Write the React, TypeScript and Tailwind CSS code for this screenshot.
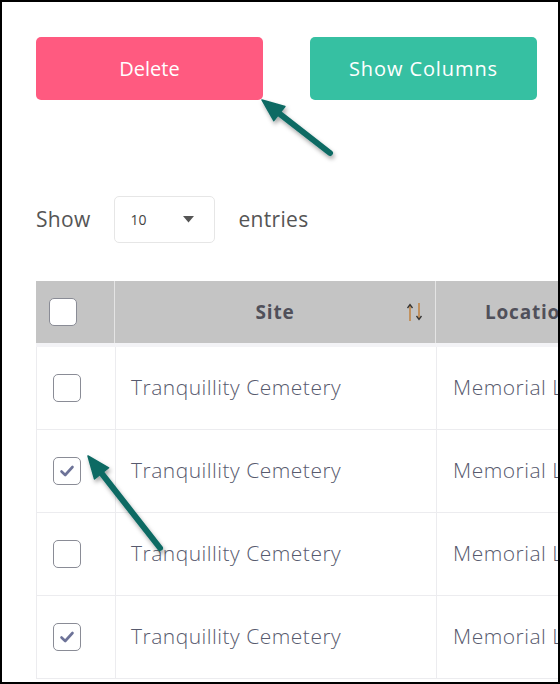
import React from "react";

const font = { fontFamily: '"Open Sans", "Noto Sans", sans-serif' };

function Arrow({ tail, tip }: { tail: [number, number]; tip: [number, number] }) {
  const dx = tip[0] - tail[0];
  const dy = tip[1] - tail[1];
  const len = Math.hypot(dx, dy);
  const ux = dx / len;
  const uy = dy / len;
  const bx = tip[0] - ux * 22;
  const by = tip[1] - uy * 22;
  const nx = -uy * 9;
  const ny = ux * 9;
  return (
    <g filter="url(#shadow)">
      <line
        x1={tail[0]}
        y1={tail[1]}
        x2={bx + ux * 4}
        y2={by + uy * 4}
        stroke="#0b6a64"
        strokeWidth={6}
        strokeLinecap="round"
      />
      <polygon
        points={`${tip[0]},${tip[1]} ${bx + nx},${by + ny} ${bx - nx},${by - ny}`}
        fill="#0b6a64"
        stroke="#0b6a64"
        strokeWidth={1.5}
        strokeLinejoin="round"
      />
    </g>
  );
}

function Check({ checked, className }: { checked?: boolean; className: string }) {
  return (
    <div
      className={`w-[28px] h-[28px] rounded-[5px] border border-[#8a8c96] bg-white flex items-center justify-center ${className}`}
    >
      {checked && (
        <svg width="16" height="14" viewBox="0 0 16 14">
          <path
            d="M2.5 7.5 L6.2 11 L13.5 3"
            fill="none"
            stroke="#6d7398"
            strokeWidth="2.6"
            strokeLinecap="round"
            strokeLinejoin="round"
          />
        </svg>
      )}
    </div>
  );
}

function SortIcon() {
  return (
    <svg width="20" height="20" viewBox="0 0 20 20">
      <path d="M5 19 V3" stroke="#c0782c" strokeWidth="1.3" />
      <path d="M2.5 6 L5 2.5 L7.5 6" fill="none" stroke="#333" strokeWidth="1.3" />
      <path d="M14 1 V17" stroke="#c0782c" strokeWidth="1.3" />
      <path d="M11.5 14 L14 17.5 L16.5 14" fill="none" stroke="#333" strokeWidth="1.3" />
    </svg>
  );
}

const rows = [false, true, false, true];

export default function App() {
  return (
    <div
      className="relative w-[560px] h-[684px] border-2 border-black bg-white overflow-hidden"
      style={font}
    >
      <div className="pl-[34px] pt-[35px]">
        {/* action buttons */}
        <div className="flex gap-[47px]">
          <button className="w-[227px] h-[63px] rounded-[5px] bg-[#ff5a80] text-white text-[20px]">
            Delete
          </button>
          <button className="w-[227px] h-[63px] rounded-[5px] bg-[#36c0a2] text-white text-[20px] tracking-[0.9px]">
            Show Columns
          </button>
        </div>

        {/* page size */}
        <div className="flex items-center mt-[96px] h-[47px] text-[21px] tracking-[0.3px] text-[#555]">
          <span>Show</span>
          <div className="ml-[23px] w-[101px] h-[47px] border border-[#e6e6e6] rounded-[5px] flex items-center pl-[16px] pr-[20px] justify-between tracking-normal">
            <span className="text-[14px] text-[#444]">10</span>
            <svg width="11" height="7" viewBox="0 0 11 7">
              <path d="M0 0 H11 L5.5 6.5 Z" fill="#555" />
            </svg>
          </div>
          <span className="ml-[24px]">entries</span>
        </div>

        {/* table */}
        <div className="mt-[38px] w-[700px]">
          <div className="flex h-[62px] bg-[#c4c4c4] text-[#50505a] font-bold text-[19px] tracking-[0.8px]">
            <div className="w-[79px] flex items-center border-r border-[#e4e4e4]">
              <Check className="ml-[13px]" />
            </div>
            <div className="w-[321px] flex items-center justify-center relative border-r border-[#e4e4e4]">
              <span>Site</span>
              <div className="absolute right-[10px] top-[21px]">
                <SortIcon />
              </div>
            </div>
            <div className="flex-1 flex items-center pl-[49px]">Location</div>
          </div>
          <div className="h-[4px] bg-[#f3f3f6]" />
          {rows.map((c, i) => (
            <div
              key={i}
              className="flex h-[83px] border-b border-[#ececef] border-l text-[21px] tracking-[0.5px] font-light text-[#575a6e]"
            >
              <div className="w-[79px] flex items-center border-r border-[#ececef]">
                <Check checked={c} className="ml-[16px]" />
              </div>
              <div className="w-[321px] flex items-center pl-[15px] border-r border-[#ececef]">
                Tranquillity Cemetery
              </div>
              <div className="flex-1 flex items-center pl-[16px]">Memorial Lawn</div>
            </div>
          ))}
        </div>
      </div>

      {/* annotation arrows */}
      <svg
        className="absolute left-[-2px] top-[-2px] pointer-events-none"
        width="560"
        height="684"
      >
        <defs>
          <filter id="shadow" x="-20%" y="-20%" width="140%" height="140%">
            <feDropShadow dx="1.5" dy="3" stdDeviation="2" floodColor="#000" floodOpacity="0.35" />
          </filter>
        </defs>
        <Arrow tail={[330, 153]} tip={[262, 100]} />
        <Arrow tail={[160, 548]} tip={[88, 456]} />
      </svg>
    </div>
  );
}
